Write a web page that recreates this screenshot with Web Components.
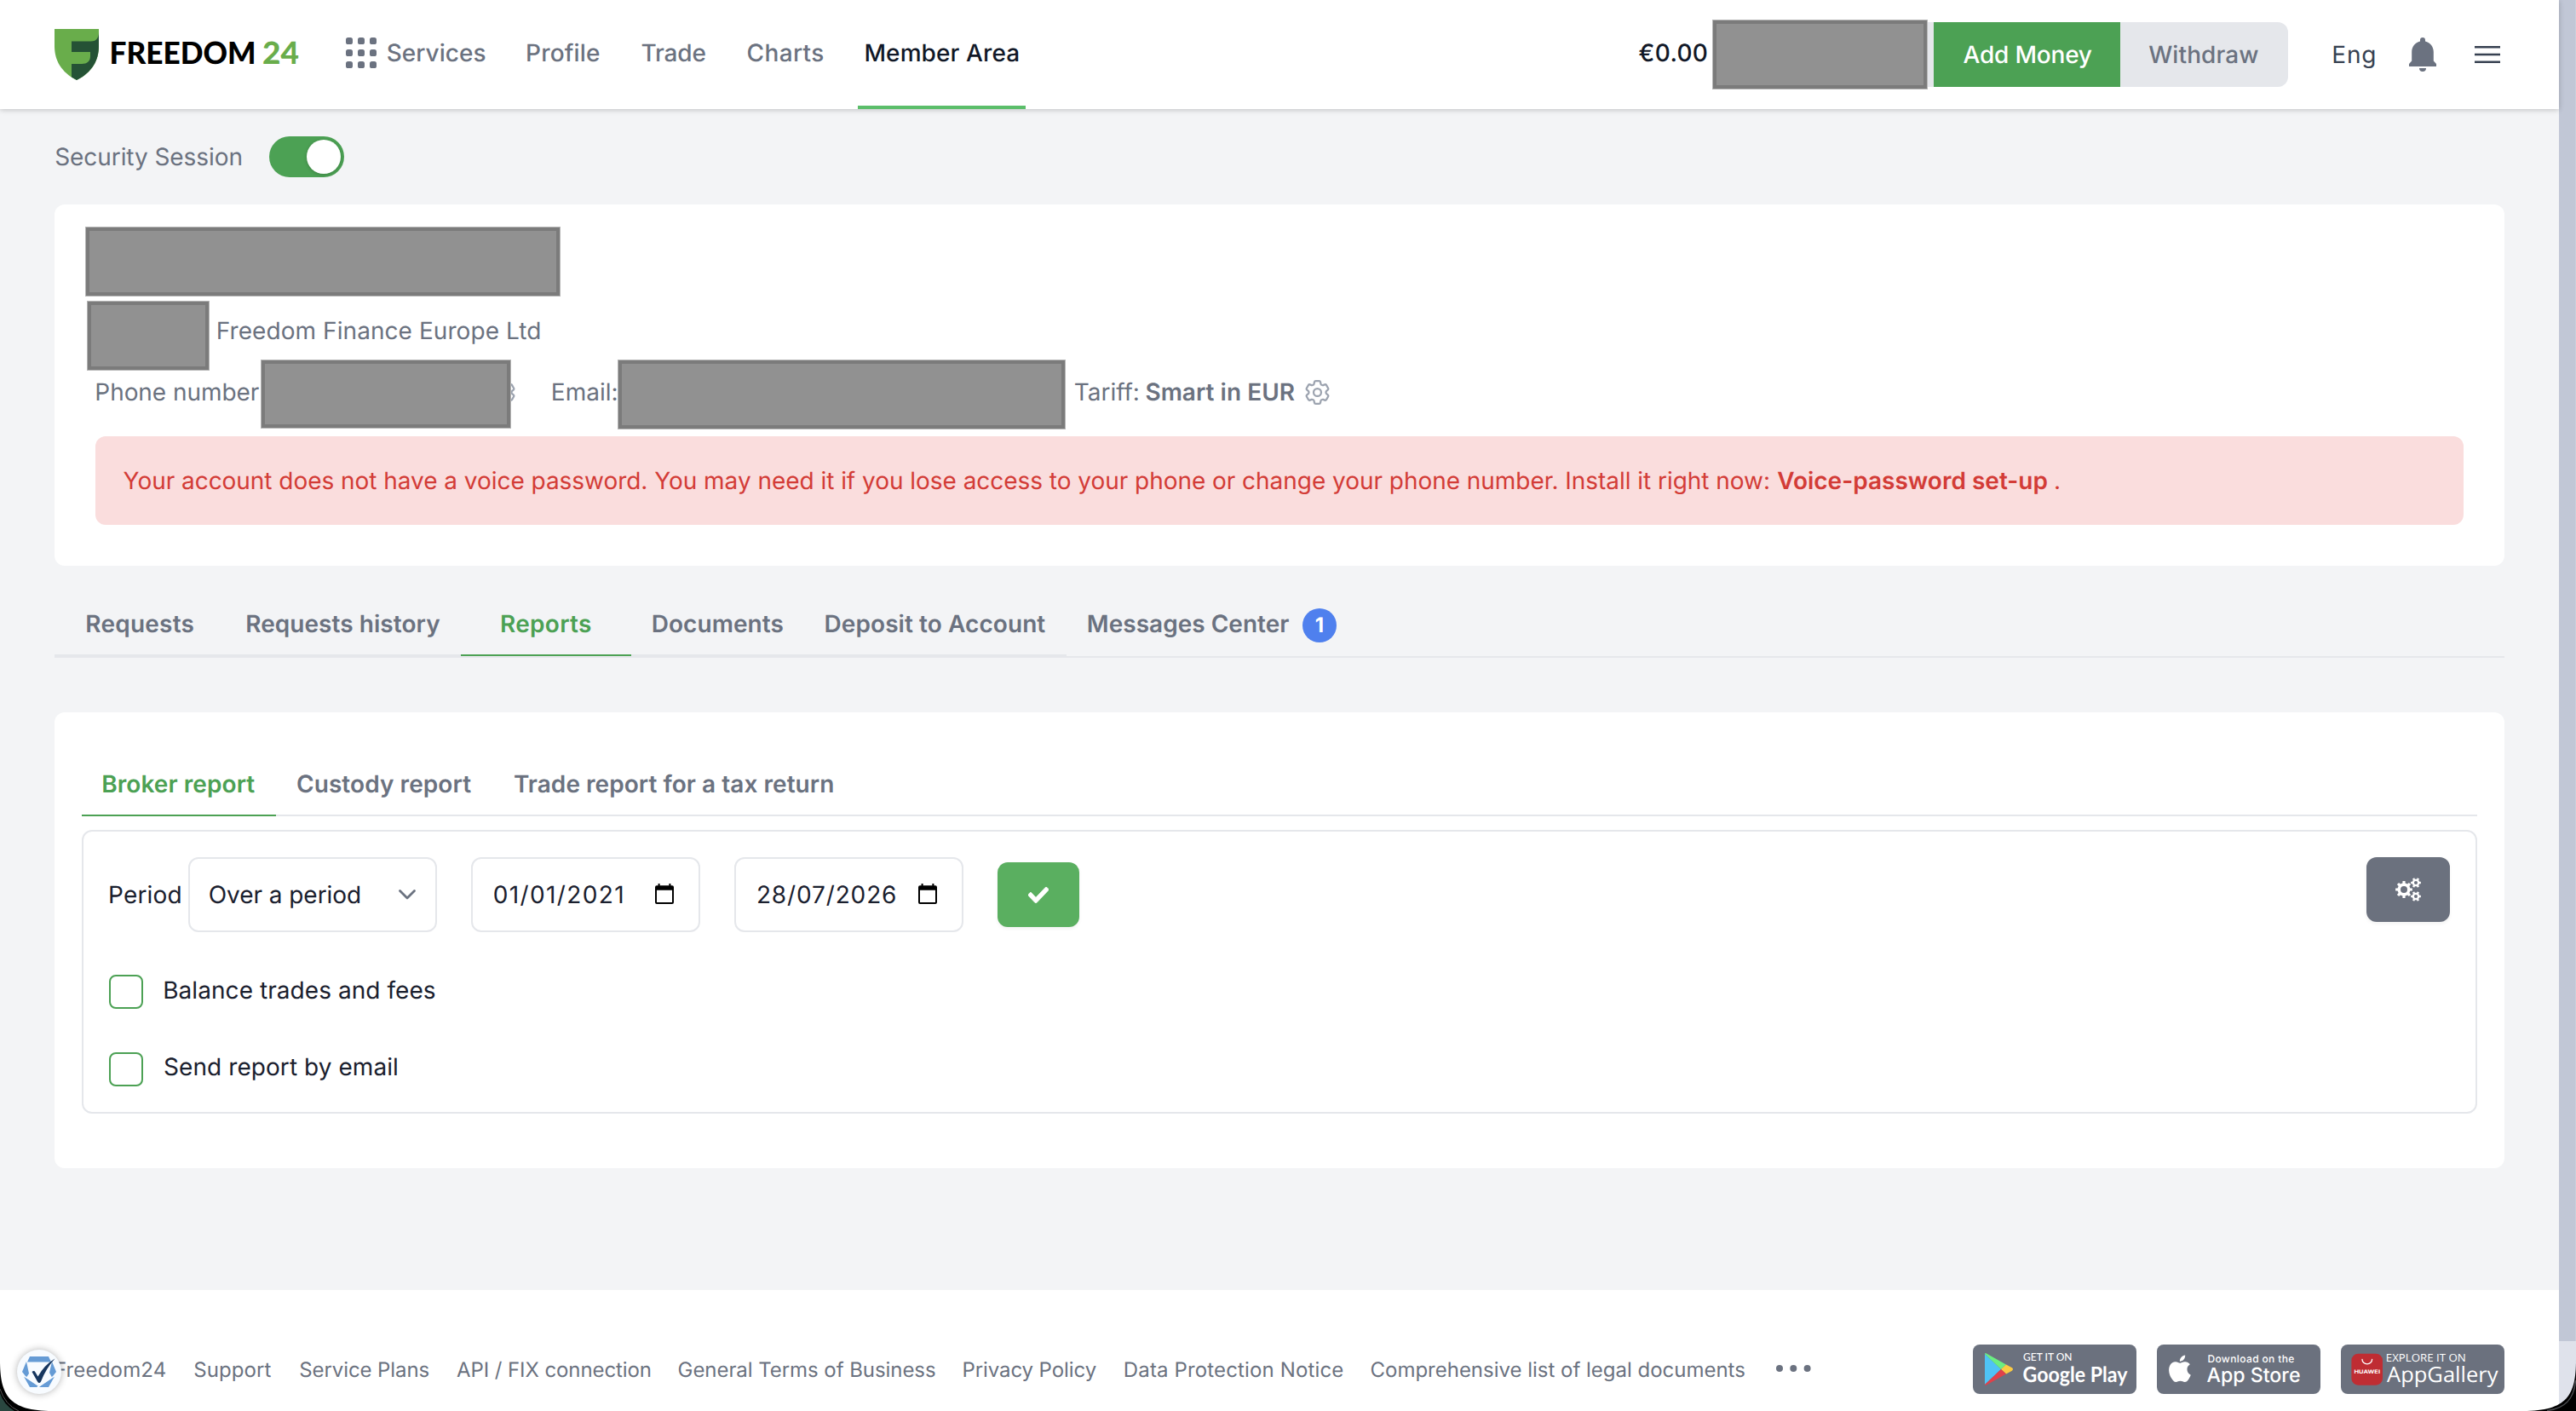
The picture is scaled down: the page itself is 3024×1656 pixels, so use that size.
<!DOCTYPE html>
<html lang="en">
<head>
<meta charset="utf-8">
<title>Freedom24 – Member Area</title>
<style>
html,body{margin:0;height:1656px;overflow:hidden;background:#f3f4f6;font-family:Inter,"Liberation Sans",sans-serif;color:#6b7280;font-optical-sizing:none;text-rendering:geometricPrecision}
</style>
</head>
<body>
<member-page></member-page>
<script>
const ctx = document.createElement('canvas').getContext('2d');
const define = (name, css, html, after) => customElements.define(name, class extends HTMLElement {
  connectedCallback() {
    if (this.shadowRoot) return;
    const root = this.attachShadow({mode: 'open'});
    root.innerHTML = `<style>*{box-sizing:border-box}${css}</style>${typeof html === 'function' ? html(this) : html}`;
    if (after) after(this, root);
  }
});

define('member-page', `
:host{display:flex;position:relative;width:3024px;height:1656px;overflow:hidden}
main{width:3004px;height:1656px}
aside{width:20px;height:1656px;background:#dfe2eb}
aside div{height:1574px;background:#c1c7d6;border-right:1px solid #cbd0dc}`, `
<main>
<site-header></site-header>
<security-toggle></security-toggle>
<account-card></account-card>
<main-tabs></main-tabs>
<report-card></report-card>
<site-footer></site-footer>
</main>
<aside><div></div></aside>
<checker-badge></checker-badge>
<window-corners></window-corners>`);

/* Grey cover over private data */
define('redacted-box', `
:host{display:block;flex:none;position:relative;z-index:1;box-sizing:border-box;background:#919191;border:5px solid #7b7b7b;outline:1px solid #b5b5b5;outline-offset:-1px}`, '');

const gearPath = (cx, cy, ro, ri, hole, n) => {
  let d = '';
  const step = 2 * Math.PI / n, p = (r, a) => `${(cx + r * Math.cos(a)).toFixed(2)} ${(cy + r * Math.sin(a)).toFixed(2)}`;
  for (let i = 0; i < n; i++) {
    const a = i * step;
    d += `${i ? 'L' : 'M'}${p(ri, a - step * .27)}L${p(ro, a - step * .2)}L${p(ro, a + step * .2)}L${p(ri, a + step * .27)}`;
  }
  return d + `ZM${cx - hole} ${cy}a${hole} ${hole} 0 1 0 ${2 * hole} 0a${hole} ${hole} 0 1 0 ${-2 * hole} 0Z`;
};
const grid = [0, 14, 28].flatMap(y => [0, 14, 28].map(x => `<rect x="${x}" y="${y}" width="8" height="8" rx="2.6"/>`)).join('');
const icons = {
  grid: [36, 36, '0 0 36 36', `<g fill="#6b7280">${grid}</g>`],
  bell: [32, 40, '0 0 32 40', '<path fill="#6b7280" d="M16 0a3 3 0 0 1 3 3v1.4c6 1.4 9.8 6.200 9.800 12.600v10.500l3.200 3.500v3H0v-3l3.200-3.500V17c0-6.400 3.800-11.200 9.800-12.600V3a3 3 0 0 1 3-3zM12 36h8a4 4 0 0 1-8 0z"/>'],
  menu: [30, 20, '0 0 30 20', '<path fill="#374151" d="M0 0h30v2.600H0zM0 8.800h30v2.500H0zM0 17.400h30V20H0z"/>'],
  gear: [29, 29, '2.25 2.25 19.5 19.5', '<path fill="none" stroke="#9ca3af" stroke-width="1.5" stroke-linejoin="round" d="M9.594 3.94c.09-.542.56-.94 1.11-.94h2.593c.55 0 1.02.398 1.11.94l.213 1.281c.063.374.313.686.645.87.074.04.147.083.22.127.325.196.72.257 1.075.124l1.217-.456a1.125 1.125 0 0 1 1.37.49l1.296 2.247a1.125 1.125 0 0 1-.26 1.431l-1.003.827c-.293.241-.438.613-.43.992a7.723 7.723 0 0 1 0 .255c-.008.378.137.75.43.991l1.004.827c.424.35.534.955.26 1.43l-1.298 2.247a1.125 1.125 0 0 1-1.369.491l-1.217-.456c-.355-.133-.75-.072-1.076.124a6.47 6.47 0 0 1-.22.128c-.331.183-.581.495-.644.869l-.213 1.281c-.09.543-.56.94-1.11.94h-2.594c-.55 0-1.019-.398-1.11-.94l-.213-1.281c-.062-.374-.312-.686-.644-.87a6.52 6.52 0 0 1-.22-.127c-.325-.196-.72-.257-1.076-.124l-1.217.456a1.125 1.125 0 0 1-1.369-.49l-1.297-2.247a1.125 1.125 0 0 1 .26-1.431l1.004-.827c.292-.24.437-.613.43-.991a6.932 6.932 0 0 1 0-.255c.007-.38-.138-.751-.43-.992l-1.004-.827a1.125 1.125 0 0 1-.26-1.43l1.297-2.247a1.125 1.125 0 0 1 1.37-.491l1.216.456c.356.133.751.072 1.076-.124.072-.044.146-.086.22-.128.332-.183.582-.495.644-.869l.214-1.28ZM15 12a3 3 0 1 1-6 0 3 3 0 0 1 6 0Z"/>'],
  chevron: [22, 14, '0 0 22 14', '<path fill="none" stroke="#6b7280" stroke-width="2.800" stroke-linecap="round" stroke-linejoin="round" d="M2.500 2.500 11 11 19.500 2.500"/>'],
  calendar: [22, 24, '0 0 22 24', '<path fill="#000" fill-rule="evenodd" d="M3.600 0h2v2.200h10.800V0h2v2.200H20a2 2 0 0 1 2 2V22a2 2 0 0 1-2 2H2a2 2 0 0 1-2-2V4.200a2 2 0 0 1 2-2h1.600zM2 7.800V22h18V7.800z"/>'],
  check: [24, 19, '0 65 512 382', '<path fill="#fff" stroke="#fff" stroke-width="14" d="M173.898 439.404l-166.4-166.4c-9.997-9.997-9.997-26.206 0-36.204l36.203-36.204c9.997-9.998 26.207-9.998 36.204 0L192 312.690 432.095 72.596c9.997-9.997 26.207-9.997 36.204 0l36.203 36.204c9.997 9.997 9.997 26.206 0 36.204l-294.400 294.401c-9.998 9.997-26.207 9.997-36.204-.001z"/>'],
  cogs: [30, 28, '0 0 30 28', `<path fill="#fff" fill-rule="evenodd" d="${gearPath(10, 14, 10, 7.6, 4, 8)}"/><path fill="#fff" fill-rule="evenodd" d="${gearPath(24, 6, 6, 4.4, 2, 6)}"/><path fill="#fff" fill-rule="evenodd" d="${gearPath(24, 22, 6, 4.4, 2, 6)}"/>`],
  dots: [41, 8, '0 0 41 8', '<g fill="#6b7280"><circle cx="4" cy="4" r="4"/><circle cx="20.300" cy="4" r="4"/><circle cx="36.600" cy="4" r="4"/></g>']
};
define('ui-icon', ':host{display:block;flex:none}svg{display:block}', el => {
  const [w, h, vb, body] = icons[el.getAttribute('name')];
  return `<svg width="${w}" height="${h}" viewBox="${vb}" preserveAspectRatio="none">${body}</svg>`;
});

define('brand-logo', ':host{display:block;flex:none}svg{display:block}text{font-family:Lato,"Open Sans",sans-serif;font-weight:900;font-size:36px}', `
<svg width="290" height="60" viewBox="0 0 290 60">
<path fill="#69ad4b" d="M0 0h52v20c0 17-8 31-26 40C8 51 0 37 0 20z"/>
<path fill="#255235" d="M52 4v16c0 17-8 31-26 40l-6-3.600V41h12c6 0 10-3 10-9v-5H20V14.500h23c5 0 9-3 9-10.500z"/>
<text x="64.500" y="41.300" fill="#000" textLength="172" lengthAdjust="spacingAndGlyphs">FREEDOM</text>
<text x="244" y="41.300" fill="#69ad4b" textLength="43" lengthAdjust="spacingAndGlyphs">24</text>
</svg>`);

define('nav-item', `
:host{display:block;flex:none;height:128px;color:#6b7280;border-bottom:4px solid transparent;box-sizing:border-box}
:host([active]){color:#111827;border-color:#5bbe6a}
div{display:flex;align-items:center;height:124px}`, '<div><slot></slot></div>');

define('site-header', `
:host{display:flex;align-items:center;height:128px;padding:0 69px 0 64px;box-sizing:border-box;background:#fff;box-shadow:0 1px 6px rgba(0,0,0,.22);position:relative}
.right{display:flex;align-items:center;margin-left:auto}
.btns{display:flex;flex:none;align-items:center;height:76px;background:#e5e7eb;border-radius:0 12px 12px 0;width:430px}
.add{display:flex;flex:none;width:219px;height:76px;background:#4ca154;color:#fff}
.pair{display:flex;flex:none;align-items:center;height:82px;width:762px}
nav{display:flex}`, `
<brand-logo></brand-logo>
<nav>
<nav-item style="margin-left:52px"><ui-icon name="grid"></ui-icon><ui-text w="114.500" ml="13" weight="500">Services</ui-text></nav-item>
<nav-item style="margin-left:49.800px"><ui-text w="84" weight="500">Profile</ui-text></nav-item>
<nav-item style="margin-left:50px"><ui-text w="74.500" weight="500">Trade</ui-text></nav-item>
<nav-item style="margin-left:50px"><ui-text w="88.500" weight="500">Charts</ui-text></nav-item>
<nav-item active style="margin-left:41px;width:197px"><ui-text w="178.700" ml="9.300" weight="500">Member Area</ui-text></nav-item>
</nav>
<div class="right">
<div class="pair">
<ui-text w="79.500" weight="500" color="#111827" lh="82" style="margin-top:-4px">€0.00</ui-text>
<redacted-box style="width:253px;height:82px;margin-left:6.500px"></redacted-box>
<div class="btns" style="margin-left:-7px">
<div class="add" style="margin-left:14px"><ui-text w="150.600" ml="35" weight="500" lh="76">Add Money</ui-text></div>
<ui-text w="128.500" ml="33.600" weight="500" lh="76">Withdraw</ui-text>
</div>
</div>
<ui-text w="48" ml="53.500" color="#374151" lh="76">Eng</ui-text>
<ui-icon name="bell" style="margin-left:40.500px"></ui-icon>
<ui-icon name="menu" style="margin-left:45px"></ui-icon>
</div>`);

define('security-toggle', `
:host{display:flex;align-items:center;height:48px;padding-left:65.500px;margin-top:32px}
.t{display:flex;justify-content:flex-end;width:88px;height:48px;padding:4px;border-radius:24px;background:#4ca154;margin-left:33.500px}
.k{width:40px;height:40px;border-radius:50%;background:#fff;box-shadow:0 1px 4px rgba(0,0,0,.2)}`,
'<ui-text w="217.400" lh="48">Security Session</ui-text><div class="t"><div class="k"></div></div>');

define('account-card', `
:host{display:block;height:424px;margin:32px 64px 0;padding-top:26px;border-radius:12px;background:#fff;box-sizing:border-box}
.row{display:flex;align-items:flex-start}
.alert{display:flex;height:104px;margin:0 48px;padding-left:33px;border-radius:12px;background:#fadddd;color:#d33c37}`, `
<div class="row" style="height:87px"><redacted-box style="width:558px;height:82px;margin-left:35.500px"></redacted-box></div>
<div class="row" style="height:69px"><redacted-box style="width:144px;height:82px;margin-left:38px"></redacted-box><ui-text w="377.500" ml="10" lh="70">Freedom Finance Europe Ltd</ui-text></div>
<div class="row" style="height:90px">
<ui-text w="190.300" ml="49.500" lh="76">Phone number</ui-text>
<redacted-box style="width:294px;height:81px;margin-left:2.200px"></redacted-box>
<ui-icon name="gear" style="margin:24px 0 0 -24px"></ui-icon>
<ui-text w="74.700" ml="44" lh="76">Email:</ui-text>
<redacted-box style="width:526px;height:82px;margin-left:1px"></redacted-box>
<ui-text w="74" ml="11.300" lh="76">Tariff:</ui-text>
<ui-text w="174.500" ml="9.300" weight="600" lh="76">Smart in EUR</ui-text>
<ui-icon name="gear" style="margin:24px 0 0 12px"></ui-icon>
</div>
<div class="alert">
<ui-text w="1931" lh="104">Your account does not have a voice password. You may need it if you lose access to your phone or change your phone number. Install it right now:</ui-text>
<ui-text w="316.500" ml="10.600" weight="600" lh="104">Voice-password set-up</ui-text>
<ui-text w="4" ml="10" lh="104">.</ui-text>
</div>`);

define('tab-item', `
:host{display:flex;flex:none;justify-content:center;height:74px;box-sizing:border-box;border-bottom:2px solid #e5e7eb}
:host([active]){color:#4ca154;border-color:#4ca154}
:host([plain]){border-color:transparent;justify-content:flex-start;align-items:center}`, '<slot></slot>');

define('main-tabs', `
:host{display:flex;height:76px;margin:32px 64px 0;box-sizing:border-box;border-bottom:2px solid #e5e7eb}
.n{display:flex;justify-content:center;width:40px;height:40px;border-radius:50%;background:#4f80ee;color:#fff;margin:4px 0 0 16px}`, `
<tab-item style="width:201px"><ui-text w="125" weight="600">Requests</ui-text></tab-item>
<tab-item style="width:276.300px"><ui-text w="226.400" weight="600">Requests history</ui-text></tab-item>
<tab-item active style="width:199.700px"><ui-text w="104.700" weight="600">Reports</ui-text></tab-item>
<tab-item style="width:203.300px"><ui-text w="152.400" weight="600">Documents</ui-text></tab-item>
<tab-item style="width:307.700px"><ui-text w="257.700" weight="600">Deposit to Account</ui-text></tab-item>
<tab-item plain><ui-text w="235.700" ml="25.600" weight="600">Messages Center</ui-text><div class="n"><ui-text w="9" size="24" weight="700" lh="39">1</ui-text></div></tab-item>`);

define('form-field', `
:host{display:flex;flex:none;align-items:center;height:88px;box-sizing:border-box;border:2px solid #e5e7eb;border-radius:12px;background:#fff}`, '<slot></slot>');

define('check-row', `
:host{display:flex;align-items:flex-start;height:40px}
i{width:40px;height:40px;border:2px solid #4ca154;border-radius:8px;margin-right:25.400px}`, '<i></i><slot></slot>');

define('report-card', `
:host{display:block;height:535px;margin:64px 64px 0;padding:48px 32px 0;border-radius:12px;background:#fff;box-sizing:border-box}
.tabs{display:flex;height:74px;box-shadow:inset 0 -2px #e5e7eb}
.panel{height:333px;margin-top:16px;padding:30px 30px 0 30px;border:2px solid #e5e7eb;border-radius:12px;color:#1a202e}
.row{display:flex;align-items:center;height:88px}
.btn{display:flex;align-items:center;justify-content:center;height:76px;border-radius:12px;box-shadow:0 2px 4px rgba(0,0,0,.06)}`, `
<div class="tabs">
<tab-item active style="width:228px"><ui-text w="178" weight="600">Broker report</ui-text></tab-item>
<ui-text w="203.500" ml="25.300" weight="600">Custody report</ui-text>
<ui-text w="373.700" ml="51" weight="600">Trade report for a tax return</ui-text>
</div>
<div class="panel">
<div class="row">
<ui-text w="82.600" ml="1.200">Period</ui-text>
<form-field style="width:292px;margin-left:9.200px"><ui-text w="176.400" ml="23">Over a period</ui-text><ui-icon name="chevron" style="margin-left:44.500px"></ui-icon></form-field>
<form-field style="width:269px;margin-left:40px"><ui-text w="150.400" ml="25">01/01/2021</ui-text><ui-icon name="calendar" style="margin:-2px 0 0 38.800px"></ui-icon></form-field>
<form-field style="width:269px;margin-left:40px"><ui-text w="161.200" ml="25.700">28/07/2026</ui-text><ui-icon name="calendar" style="margin:-2px 0 0 27.300px"></ui-icon></form-field>
<div class="btn" style="width:96px;margin-left:40px;background:#5aaf60"><ui-icon name="check"></ui-icon></div>
<div class="btn" style="width:98px;margin:0 0 12px auto;background:#6b717e"><ui-icon name="cogs"></ui-icon></div>
</div>
<check-row style="margin-top:50px"><ui-text w="317" lh="36">Balance trades and fees</ui-text></check-row>
<check-row style="margin-top:51px"><ui-text w="272.500" lh="34">Send report by email</ui-text></check-row>
</div>`);

const stores = {
  google: `<g transform="translate(14 10)"><path fill="#4fc3f5" d="M0 1v36L19 19z"/><path fill="#6bee82" d="M1 0 25 13.500 19 19 0 1Q0 0 1 0z"/><path fill="#fbcb43" d="M25 13.500 32 17.300Q34 19 32 20.700L25 24.500 19 19z"/><path fill="#e0414a" d="M1 38 25 24.500 19 19 0 37Q0 38 1 38z"/></g>
<text x="59" y="19" font-size="12.500" font-weight="500" font-family="Lato" textLength="57.500" lengthAdjust="spacingAndGlyphs">GET IT ON</text>
<text x="58.500" y="43.700" font-size="25" font-weight="700" font-family="Lato" textLength="123" lengthAdjust="spacingAndGlyphs">Google Play</text>`,
  apple: `<path fill="#fff" transform="translate(11.200 12.600) scale(1.310)" d="M12.152 6.896c-.948 0-2.415-1.078-3.960-1.040-2.040.027-3.910 1.183-4.961 3.014-2.117 3.675-.546 9.103 1.519 12.090 1.013 1.454 2.208 3.090 3.792 3.039 1.520-.065 2.090-.987 3.935-.987 1.831 0 2.350.987 3.960.948 1.637-.026 2.676-1.480 3.676-2.948 1.156-1.688 1.636-3.325 1.662-3.415-.039-.013-3.182-1.221-3.220-4.857-.026-3.040 2.480-4.494 2.597-4.559-1.429-2.090-3.623-2.324-4.390-2.376-2-.156-3.675 1.090-4.610 1.090zM15.530 3.830c.843-1.012 1.400-2.427 1.245-3.830-1.207.052-2.662.805-3.532 1.818-.780.896-1.454 2.338-1.273 3.714 1.338.104 2.715-.688 3.559-1.701"/>
<text x="59.400" y="21" font-size="12" font-weight="500" textLength="102" lengthAdjust="spacing">Download on the</text>
<text x="58.500" y="44" font-size="23.500" font-weight="500" textLength="110" lengthAdjust="spacingAndGlyphs">App Store</text>`,
  huawei: `<rect x="12.400" y="10.700" width="36.600" height="37" rx="8" fill="#bf2d33"/><path fill="none" stroke="#fff" stroke-width="1.300" stroke-linecap="round" d="M25 17.500a5.800 5.400 0 0 0 11.600 0"/>
<text x="15.500" y="33.800" font-size="6.200" font-weight="700" textLength="30.500" lengthAdjust="spacingAndGlyphs">HUAWEI</text>
<text x="52.800" y="19.700" font-size="12.500" font-family="Open Sans" textLength="94" lengthAdjust="spacingAndGlyphs">EXPLORE IT ON</text>
<text x="54" y="43.700" font-size="25" font-family="Open Sans" textLength="130.500" lengthAdjust="spacingAndGlyphs">AppGallery</text>`
};
define('store-badge', ':host{display:block;flex:none;width:192px;height:58px;border-radius:8px;background:#6b717e}svg{display:block;overflow:visible}text{fill:#fff}',
  el => `<svg width="192" height="58" viewBox="0 0 192 58">${stores[el.getAttribute('store')]}</svg>`);

define('site-footer', `
:host{display:flex;align-items:flex-start;height:142px;margin-top:143px;padding:64px 64px 0 66px;box-sizing:border-box;background:#fff;color:#6b7280}
.stores{display:flex;gap:24px;margin-left:auto}`, `
<ui-text size="24" lh="59" w="128">Freedom24</ui-text>
<ui-text size="24" lh="59" w="89.300" ml="34.600">Support</ui-text>
<ui-text size="24" lh="59" w="150.400" ml="34.700">Service Plans</ui-text>
<ui-text size="24" lh="59" w="226.600" ml="33.700">API / FIX connection</ui-text>
<ui-text size="24" lh="59" w="300.500" ml="33.700">General Terms of Business</ui-text>
<ui-text size="24" lh="59" w="155" ml="34.100">Privacy Policy</ui-text>
<ui-text size="24" lh="59" w="255.300" ml="34.400">Data Protection Notice</ui-text>
<ui-text size="24" lh="59" w="437.800" ml="33.700">Comprehensive list of legal documents</ui-text>
<ui-icon name="dots" style="margin:24px 0 0 37px"></ui-icon>
<div class="stores"><store-badge store="google"></store-badge><store-badge store="apple"></store-badge><store-badge store="huawei"></store-badge></div>`);

define('checker-badge', `
:host{display:block;position:absolute;left:20px;top:1584px;width:52px;height:52px;border-radius:50%;background:#f7fbff;box-shadow:0 0 8px rgba(0,0,0,.3)}svg{display:block}`, `
<svg width="52" height="52" viewBox="0 0 52 52"><g fill="#659bd5">
<path d="M15 8h22l3 6.500H12z"/><path d="M11 14 14 28 11 32.500 6 26z"/><path d="M41 14 46 26 41 32.500 38 27z"/>
<path d="M8 31.500 25 43 23 44H15z"/><path d="M44 31.500 25.500 44H37z"/></g>
<path fill="none" stroke="#f7fbff" stroke-width="1.400" d="M7 30 27 43M45 30 24 44"/>
<path fill="#16365f" d="M17.500 26q2.500-2 4 .5l3 5Q32 18 44.500 10.500 34 22 28 37.500q-2 3-4 0z"/></svg>`);

define('window-corners', `
:host{display:block}
svg{display:block;position:absolute;top:1592px}`, `
<svg style="left:0" width="64" height="64" viewBox="0 0 64 64"><path fill="#000" d="M0 4C0 45 10 64 62 64H0z"/><path fill="#2a4740" d="M0 43Q4 56 17 64H0z"/><path fill="none" stroke="#555" stroke-width="1" d="M0 38Q6 57 22 64"/></svg>
<svg style="left:2960px" width="64" height="64" viewBox="0 0 64 64"><path fill="#000" d="M64 4C64 45 54 64 2 64H64z"/><path fill="none" stroke="#4a4c50" stroke-width="1.500" d="M63.500 28C62 49 52 61 30 63.500"/></svg>`);

/* Single-line label whose box is exactly its ink width (w), tracked to fit.
   Defined last, so that every parent already has its layout when it measures itself. */
define('ui-text', `
:host{display:block;flex:none;white-space:nowrap;font-size:28px;line-height:72px}
span{display:inline-block;vertical-align:top}`, '<span><slot></slot></span>', (el, root) => {
  const size = +(el.getAttribute('size') || 28), weight = el.getAttribute('weight') || 400, w = +el.getAttribute('w');
  const text = el.textContent, span = root.querySelector('span');
  el.style.cssText += `;font-size:${size}px;font-weight:${weight};width:${w}px;`;
  if (el.hasAttribute('lh')) el.style.lineHeight = el.getAttribute('lh') + 'px';
  if (el.hasAttribute('ml')) el.style.marginLeft = el.getAttribute('ml') + 'px';
  if (el.hasAttribute('color')) el.style.color = el.getAttribute('color');
  ctx.font = `${weight} ${size * 10}px Inter, "Liberation Sans", sans-serif`;
  const m = ctx.measureText(text);
  const left = -m.actualBoundingBoxLeft / 10, right = (m.width - m.actualBoundingBoxRight) / 10;
  const ink = span.getBoundingClientRect().width - left - right;
  span.style.marginLeft = -left + 'px';
  if (text.length > 1) span.style.letterSpacing = ((w - ink) / (text.length - 1)).toFixed(4) + 'px';
});
</script>
</body>
</html>
